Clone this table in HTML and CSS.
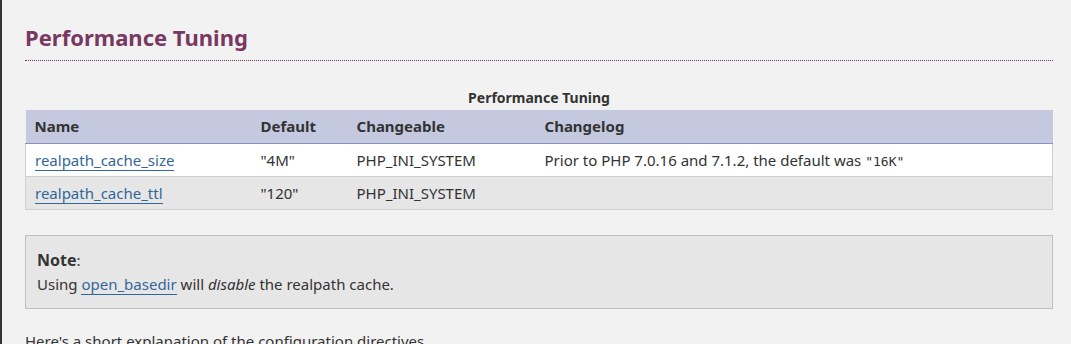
FILE: index.html
```html
<!DOCTYPE html>
<html>
<head>
<meta charset="utf-8">
<link rel="stylesheet" href="styles.css">
</head>
<body>
<div class="page">
  <h2 class="title">Performance Tuning</h2>
  <table class="doctable">
    <caption>Performance Tuning</caption>
    <thead>
      <tr>
        <th class="c-name">Name</th>
        <th class="c-def">Default</th>
        <th class="c-chg">Changeable</th>
        <th class="c-log">Changelog</th>
      </tr>
    </thead>
    <tbody>
      <tr>
        <td><a href="#">realpath_cache_size</a></td>
        <td>"4M"</td>
        <td>PHP_INI_SYSTEM</td>
        <td>Prior to PHP 7.0.16 and 7.1.2, the default was <code>"16K"</code></td>
      </tr>
      <tr class="alt">
        <td><a href="#">realpath_cache_ttl</a></td>
        <td>"120"</td>
        <td>PHP_INI_SYSTEM</td>
        <td></td>
      </tr>
    </tbody>
  </table>
  <div class="note">
    <strong>Note</strong>:
    <p>Using <a href="#">open_basedir</a> will <em>disable</em> the realpath cache.</p>
  </div>
  <p class="para">Here's a short explanation of the configuration directives.</p>
</div>
</body>
</html>
```
FILE: styles.css
```css
html, body {
  margin: 0;
  padding: 0;
  background: #f2f2f2;
}
body {
  border-left: 2px solid #333;
  min-height: 344px;
  box-sizing: border-box;
  font-family: "Noto Sans", "Open Sans", sans-serif;
  font-size: 15px;
  color: #333;
}
.page {
  padding: 20px 18px 0 23px;
}
.title {
  margin: 0;
  font-size: 22px;
  font-weight: 700;
  color: #793862;
  line-height: 34px;
  padding: 0 0 6px;
  border-bottom: 1px dotted #793862;
}
.doctable {
  width: 100%;
  border-collapse: collapse;
  margin-top: 25px;
}
.doctable caption {
  font-weight: 700;
  font-size: 14px;
  line-height: 24px;
  padding-bottom: 0;
}
.doctable th, .doctable td {
  text-align: left;
  padding: 5px 9px;
  vertical-align: middle;
}
.doctable th {
  font-weight: 700;
  line-height: 23px;
}
.doctable td {
  line-height: 22px;
}
.doctable thead tr {
  background: #c4c9df;
  border-bottom: 1px solid #8892bf;
}
.doctable tbody tr {
  background: #fff;
  border: 1px solid #d0d0d0;
  border-top: 0;
}
.doctable tbody tr.alt {
  background: #e6e6e6;
}
.c-name { width: 208px; }
.c-def { width: 78px; }
.c-chg { width: 170px; }
a {
  color: #369;
  text-decoration: none;
  border-bottom: 1px solid #369;
}
code {
  font-family: "DejaVu Sans Mono", monospace;
  font-size: 13px;
  line-height: 1;
}
.note {
  margin-top: 25px;
  background: #e6e6e6;
  border: 1px solid #c0c0c0;
  padding: 12px 11px;
  line-height: 24px;
}
.note strong {
  font-size: 16px;
}
.note p {
  margin: 0;
}
.para {
  margin: 20px 0 0;
  line-height: 24px;
}
```
